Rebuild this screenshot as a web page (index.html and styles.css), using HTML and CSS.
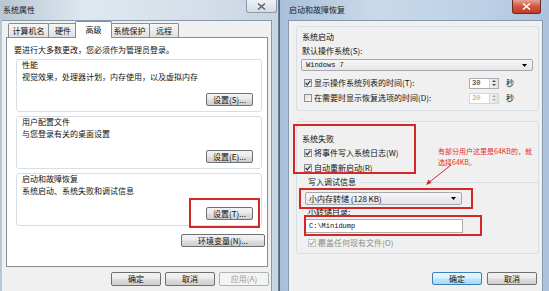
FILE: index.html
```html
<!DOCTYPE html>
<html lang="zh-CN">
<head>
    <meta charset="UTF-8">
    <title>系统属性</title>
    <link rel="stylesheet" href="styles.css">
</head>
<body>
    <div class="win win-left">
        <div class="titlebar">
            <span class="title">系统属性</span>
            <span class="close close-idle">
                <svg width="9" height="7" viewBox="0 0 9 7"><path d="M1 0.5 L8 6.5 M8 0.5 L1 6.5" stroke="#5a5f66" stroke-width="1.4"/></svg>
            </span>
        </div>
        <div class="client">
            <div class="tabs">
                <span class="tab t-wide">计算机名</span>
                <span class="tab">硬件</span>
                <span class="tab active">高级</span>
                <span class="tab t-wide">系统保护</span>
                <span class="tab">远程</span>
            </div>
            <div class="tabpanel">
                <p class="note">要进行大多数更改，您必须作为管理员登录。</p>

                <div class="group">
                    <div class="label">性能</div>
                    <div class="desc">视觉效果，处理器计划，内存使用，以及虚拟内存</div>
                    <div class="btnrow"><span class="btn">设置(S)...</span></div>
                </div>

                <div class="group">
                    <div class="label">用户配置文件</div>
                    <div class="desc">与您登录有关的桌面设置</div>
                    <div class="btnrow"><span class="btn">设置(E)...</span></div>
                </div>

                <div class="group">
                    <div class="label">启动和故障恢复</div>
                    <div class="desc">系统启动、系统失败和调试信息</div>
                    <div class="btnrow"><span class="btn">设置(T)...</span></div>
                </div>

                <div class="envrow"><span class="btn btn-env">环境变量(N)...</span></div>
            </div>
            <div class="dlg-buttons">
                <span class="btn btn-dlg">确定</span>
                <span class="btn btn-dlg">取消</span>
                <span class="btn btn-dlg disabled">应用(A)</span>
            </div>
            <div class="mark mark-left"></div>
        </div>
    </div>

    <div class="win win-right">
        <div class="titlebar">
            <span class="title">启动和故障恢复</span>
            <span class="close close-red">
                <svg width="9" height="7" viewBox="0 0 9 7"><path d="M1 0.5 L8 6.5 M8 0.5 L1 6.5" stroke="#fff" stroke-width="1.6"/></svg>
            </span>
        </div>
        <div class="client">
            <div class="box box-boot">
                <div class="label">系统启动</div>
                <div class="line">默认操作系统(S):</div>
                <div class="combo combo-os">
                    <span class="mono">Windows 7</span>
                    <svg class="drop" width="5" height="3" viewBox="0 0 5 3"><path d="M0 0 H5 L2.5 3 Z" fill="#000"/></svg>
                </div>
                <div class="cbrow">
                    <span class="cb"><svg width="6" height="6" viewBox="0 0 6 6"><path d="M0.6 3 L2.3 4.9 L5.4 0.8" stroke="#22355f" stroke-width="1.2" fill="none"/></svg></span>
                    <span class="cbtext">显示操作系统列表的时间(T):</span>
                    <span class="spin">
                        <span class="spin-val">30</span>
                        <span class="spin-arrows">
                            <svg width="4" height="2" viewBox="0 0 4 2"><path d="M0 2 H4 L2 0 Z" fill="#4a4a4a"/></svg>
                            <svg width="4" height="2" viewBox="0 0 4 2"><path d="M0 0 H4 L2 2 Z" fill="#4a4a4a"/></svg>
                        </span>
                    </span>
                    <span class="unit">秒</span>
                </div>
                <div class="cbrow">
                    <span class="cb"></span>
                    <span class="cbtext">在需要时显示恢复选项的时间(D):</span>
                    <span class="spin spin-off">
                        <span class="spin-val">30</span>
                        <span class="spin-arrows">
                            <svg width="4" height="2" viewBox="0 0 4 2"><path d="M0 2 H4 L2 0 Z" fill="#b0b0b0"/></svg>
                            <svg width="4" height="2" viewBox="0 0 4 2"><path d="M0 0 H4 L2 2 Z" fill="#b0b0b0"/></svg>
                        </span>
                    </span>
                    <span class="unit">秒</span>
                </div>
            </div>

            <div class="box box-fail">
                <div class="label">系统失败</div>
                <div class="cbrow cbrow-tight">
                    <span class="cb"><svg width="6" height="6" viewBox="0 0 6 6"><path d="M0.6 3 L2.3 4.9 L5.4 0.8" stroke="#22355f" stroke-width="1.2" fill="none"/></svg></span>
                    <span class="cbtext">将事件写入系统日志(W)</span>
                </div>
                <div class="cbrow cbrow-tight second">
                    <span class="cb"><svg width="6" height="6" viewBox="0 0 6 6"><path d="M0.6 3 L2.3 4.9 L5.4 0.8" stroke="#22355f" stroke-width="1.2" fill="none"/></svg></span>
                    <span class="cbtext">自动重新启动(R)</span>
                </div>
                <div class="debug">
                    <div class="debug-head">写入调试信息</div>
                    <div class="combo combo-dump">
                        <span>小内存转储 (128 KB)</span>
                        <svg class="drop" width="5" height="3" viewBox="0 0 5 3"><path d="M0 0 H5 L2.5 3 Z" fill="#000"/></svg>
                    </div>
                    <div class="line tight">小转储目录:</div>
                    <div class="textbox"><span class="mono">C:\Minidump</span></div>
                    <div class="cbrow cbrow-tight off">
                        <span class="cb cb-off"><svg width="6" height="6" viewBox="0 0 6 6"><path d="M0.6 3 L2.3 4.9 L5.4 0.8" stroke="#a8a8a8" stroke-width="1.2" fill="none"/></svg></span>
                        <span class="cbtext">覆盖任何现有文件(O)</span>
                    </div>
                </div>
            </div>

            <div class="dlg-buttons right-buttons">
                <span class="btn btn-dlg focus">确定</span>
                <span class="btn btn-dlg">取消</span>
            </div>

            <!-- red marks drawn over the screenshot -->
            <div class="mark mark-fail"></div>
            <div class="mark mark-dump"></div>
            <div class="mark mark-dir"></div>
            <div class="memo">有部分用户这里是64KB的，就<br>选择64KB。</div>
            <svg class="arrow" width="40" height="32" viewBox="0 0 40 32">
                <path d="M32 7 L8 26" stroke="#d42828" stroke-width="1"/>
                <path d="M7 27 L9.5 21.5 L12.5 25 Z" fill="#d42828"/>
            </svg>
        </div>
    </div>
</body>
</html>
```

FILE: styles.css
```css
* {
    box-sizing: border-box;
}

html,
body {
    margin: 0;
    padding: 0;
}

body {
    width: 549px;
    height: 291px;
    overflow: hidden;
    display: flex;
    background: #5b7391;
    font-family: "Noto Sans CJK SC", "Liberation Sans", sans-serif;
    font-size: 8px;
    color: #111;
}

.mono {
    font-family: "Liberation Mono", "Noto Sans CJK SC", monospace;
    font-size: 7px;
}

/* windows */
.win {
    height: 300px;
    display: flex;
    flex-direction: column;
}

.win-left {
    width: 279px;
    padding: 0 6px 0 2px;
    background: linear-gradient(90deg, #b9c6d4 0%, #dfe7ef 30%, #d6dfe9 70%, #c8d4e1 100%);
    border-right: 1px solid #6b7d92;
}

.win-right {
    width: 270px;
    padding: 0 6px 0 8px;
    background: linear-gradient(90deg, #a9bfd8 0%, #c9d9ea 35%, #bcd0e6 75%, #adc3dc 100%);
    border-left: 1px solid #55677d;
}

.titlebar {
    height: 20px;
    display: flex;
    align-items: flex-start;
    justify-content: space-between;
    margin-right: -6px;
}

.title {
    line-height: 10px;
    margin-top: 5px;
    padding-left: 1px;
    color: #1b1b1b;
}

.close {
    height: 13px;
    display: flex;
    align-items: center;
    justify-content: center;
    border-radius: 0 0 3px 3px;
}

.close-idle {
    width: 31px;
    margin-right: 1px;
    border: 1px solid #8d9aa9;
    border-top: none;
    background: linear-gradient(#eef2f6, #d3dbe4);
}

.close-red {
    width: 29px;
    height: 14px;
    margin-right: 8px;
    border: 1px solid #6e2a22;
    border-top: none;
    background: linear-gradient(#e8a093 0%, #d2563f 50%, #c13a24 100%);
}

.client {
    position: relative;
    flex: 1;
    background: #f0f0f0;
    border: 1px solid #8799ad;
    border-bottom: none;
}

.win-left .client {
    border-left: none;
}

/* tabs */
.tabs {
    height: 16px;
    display: flex;
    align-items: flex-end;
    padding-left: 6px;
}

.tab {
    width: 30px;
    height: 14px;
    margin-left: -1px;
    line-height: 13px;
    text-align: center;
    border: 1px solid #898c95;
    border-bottom: none;
    border-radius: 2px 2px 0 0;
    background: linear-gradient(#f6f6f6, #e1e1e1);
}

.tab:first-child {
    margin-left: 0;
}

.t-wide {
    width: 41px;
}

.tab.active {
    position: relative;
    z-index: 1;
    width: 37px;
    height: 17px;
    margin: 0 -2px -1px -3px;
    line-height: 15px;
    background: #fff;
}

.tabpanel {
    width: 262px;
    height: 230px;
    margin-left: 4px;
    padding: 0 5px 0 9px;
    background: #fff;
    border: 1px solid #898c95;
}

.note {
    margin: 6px 0 0 -2px;
    line-height: 12px;
}

.group {
    margin-top: 3px;
    padding: 0 8px 5px 5px;
    border: 1px solid #d5dfe5;
    border-radius: 3px;
}

.group + .group {
    margin-top: 4px;
}

.group .label {
    line-height: 10px;
}

.group .desc {
    margin-top: 1px;
    line-height: 12px;
}

.btnrow,
.envrow {
    display: flex;
    justify-content: flex-end;
}

.btnrow {
    margin-top: 10px;
}

.envrow {
    margin: 8px -3px 0 0;
}

.btn {
    width: 47px;
    height: 13px;
    line-height: 11px;
    text-align: center;
    border: 1px solid #707070;
    border-radius: 2px;
    background: linear-gradient(#f3f3f3 0%, #ebebeb 45%, #dddddd 55%, #cfcfcf 100%);
}

.btn-env {
    width: 84px;
}

.dlg-buttons {
    display: flex;
    justify-content: flex-end;
    gap: 4px;
    margin-top: 5px;
    padding-right: 2px;
}

.btn-dlg {
    width: 50px;
    height: 14px;
    line-height: 12px;
}

.btn.disabled {
    color: #9a9a9a;
    border-color: #adb2b5;
    background: #f4f4f4;
}

.btn.focus {
    border-color: #3c7fb1;
    background: linear-gradient(#eaf6fd 0%, #d9f0fc 45%, #bee6fd 55%, #a7d9f5 100%);
}

/* right dialog */
.box {
    margin: 5px 3px 0 7px;
    padding: 5px 3px 6px 5px;
    border: 1px solid #d5dfe5;
    border-radius: 3px;
}

.box .label {
    line-height: 10px;
}

.line {
    margin-top: 4px;
    line-height: 10px;
}

.line.tight {
    margin-top: 2px;
}

.combo {
    height: 12px;
    display: flex;
    align-items: center;
    justify-content: space-between;
    padding: 0 5px 0 4px;
    background: #fff;
    border: 1px solid #a4a9b1;
    border-radius: 2px;
}

.combo-os {
    width: 232px;
    margin: 3px 0 0 -1px;
    background: linear-gradient(#f6f6f6, #e6e6e6);
}

.combo-dump {
    width: 157px;
    height: 13px;
    margin: 5px 0 0 -3px;
    padding-left: 3px;
    background: linear-gradient(#f7f7f7, #e3e3e3);
}

.cbrow {
    height: 12px;
    display: flex;
    align-items: center;
    margin-top: 6px;
    padding-left: 2px;
}

.cbrow + .cbrow {
    margin-top: 3px;
}

.cbrow-tight {
    height: 10px;
    margin-top: 4px;
}

.cbrow-tight.second {
    margin-top: 5px;
}

.cb {
    width: 8px;
    height: 8px;
    display: flex;
    align-items: center;
    justify-content: center;
    margin-right: 2px;
    border: 1px solid #8e8f8f;
    background: linear-gradient(135deg, #dcdcdc, #fbfbfb);
}

.cb-off {
    border-color: #c4c4c4;
    background: #f4f4f4;
}

.cbtext {
    line-height: 10px;
}

.off .cbtext {
    color: #8d8d8d;
}

.spin {
    width: 30px;
    height: 11px;
    display: flex;
    margin-left: auto;
    border: 1px solid #abadb3;
    background: #fff;
}

.spin-val {
    flex: 1;
    padding-left: 2px;
    line-height: 9px;
    font-size: 7px;
    font-family: "Liberation Mono", monospace;
}

.spin-arrows {
    width: 9px;
    display: flex;
    flex-direction: column;
    justify-content: space-around;
    align-items: center;
    border-left: 1px solid #d0d4da;
    background: linear-gradient(90deg, #f2f2f2, #e2e2e2);
}

.spin-off {
    border-color: #d6d6d6;
    color: #a0a0a0;
}

.unit {
    width: 8px;
    margin: 0 21px 0 7px;
    line-height: 10px;
}

.box-fail {
    margin-top: 10px;
    padding: 12px 3px 5px 5px;
}

.debug {
    padding-left: 6px;
}

.debug-head {
    display: flex;
    align-items: center;
    margin-top: 4px;
    line-height: 10px;
}

.debug-head::after {
    content: "";
    flex: 1;
    height: 1px;
    margin: 0 -4px 0 4px;
    background: #d5dfe5;
}

.textbox {
    width: 158px;
    height: 14px;
    display: flex;
    align-items: center;
    margin: 2px 0 0 -3px;
    padding-left: 3px;
    background: #fff;
    border: 1px solid #abadb3;
}

.debug .cbrow-tight {
    margin-top: 5px;
    padding-left: 0;
}

.right-buttons {
    gap: 5px;
    margin-top: 18px;
    padding-right: 5px;
}

.right-buttons .btn-dlg {
    width: 50px;
    height: 13px;
    line-height: 11px;
}

/* annotations */
.mark {
    position: absolute;
    border: 2px solid #d42828;
}

.mark-left {
    left: 187px;
    top: 177px;
    width: 71px;
    height: 30px;
}

.mark-fail {
    left: 4px;
    top: 103px;
    width: 123px;
    height: 50px;
}

.mark-dump {
    left: 10px;
    top: 167px;
    width: 174px;
    height: 21px;
}

.mark-dir {
    left: 15px;
    top: 194px;
    width: 178px;
    height: 21px;
}

.memo {
    position: absolute;
    left: 149px;
    top: 125px;
    white-space: nowrap;
    font-size: 7px;
    line-height: 10.5px;
    color: #e0302c;
}

.arrow {
    position: absolute;
    left: 130px;
    top: 137px;
}
```
